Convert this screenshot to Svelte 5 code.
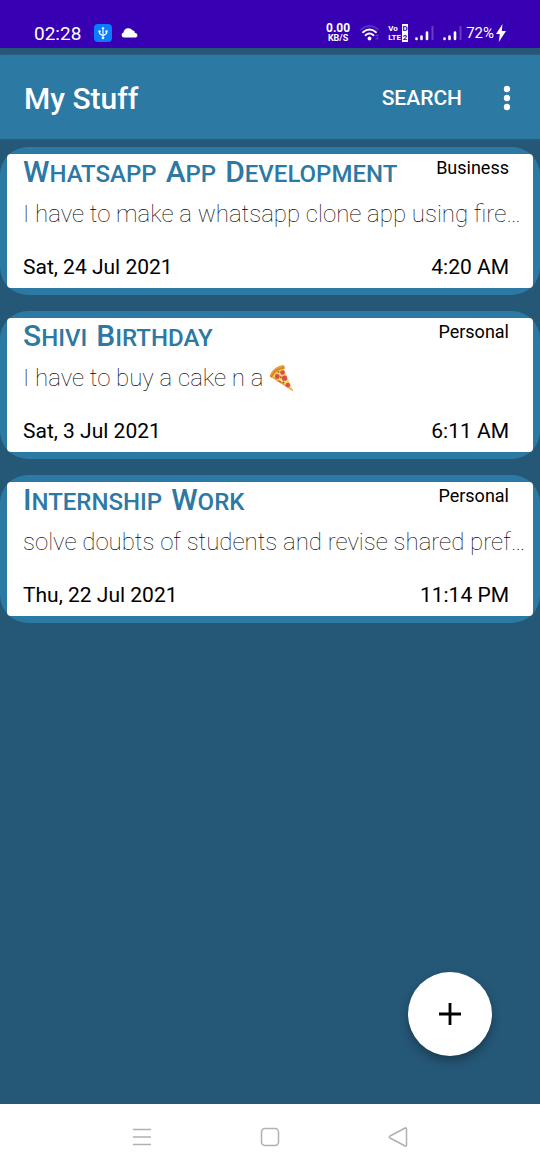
<script>
  const notes = [
    { title: 'Whatsapp App Development', tag: 'Business', body: 'I have to make a whatsapp clone app using fire…', date: 'Sat, 24 Jul 2021', time: '4:20 AM' },
    { title: 'Shivi Birthday', tag: 'Personal', body: 'I have to buy a cake n a', pizza: true, date: 'Sat, 3 Jul 2021', time: '6:11 AM' },
    { title: 'Internship Work', tag: 'Personal', body: 'solve doubts of students and revise shared pref…', date: 'Thu, 22 Jul 2021', time: '11:14 PM' }
  ];
</script>

{#snippet signal()}
  <svg width="20" height="18" viewBox="0 0 20 18" aria-hidden="true">
    <g stroke="#fff" stroke-width="2.600" stroke-linecap="round">
      <path d="M2.500 14.500v.5M7.500 12.500v2.500M13 8.500v6.500" />
    </g>
    <path d="M18.500 2v14" stroke="#6a3bc8" stroke-width="2" />
  </svg>
{/snippet}

<div class="screen">
  <header class="status">
    <span class="clock">02:28</span>
    <svg class="usb" width="18" height="18" viewBox="0 0 18 18" aria-hidden="true">
      <rect width="18" height="18" rx="4" fill="#0a7cff" />
      <g fill="none" stroke="#fff" stroke-width="1.100">
        <path d="M9 4v10M5.500 7v2.500L9 12l3.500-2.500V7" />
      </g>
      <path d="M9 2.500l1.600 2.500H7.400z" fill="#fff" />
      <circle cx="9" cy="14" r="1.300" fill="#fff" />
      <circle cx="5.500" cy="7.500" r="1.200" fill="#fff" />
      <path d="M11.400 6.400h2.200v2.200h-2.200z" fill="#fff" />
    </svg>
    <svg width="17" height="12" viewBox="0 0 17 12" aria-hidden="true">
      <path fill="#fff" d="M3 10.500a2.600 2.600 0 0 1-.5-5.100A5 5 0 0 1 11.500 3.300 3 3 0 0 1 14 6a2.300 2.300 0 0 1 .8 4.500z" />
    </svg>
    <span class="fill"></span>
    <span class="rate"><b>0.00</b><small>KB/S</small></span>
    <svg class="wifi" width="20" height="18" viewBox="0 0 20 18" aria-hidden="true">
      <g fill="none" stroke="#fff" stroke-width="1.900" stroke-linecap="round">
        <path d="M1 5.500Q9.500-1.500 18 5.500" stroke="#5a2bc2" />
        <path d="M3 8.200Q9.500 2.700 16 8.200" />
        <path d="M5.500 11.200Q9.500 7.700 13.500 11.200" />
      </g>
      <circle cx="9.500" cy="14.500" r="1.900" fill="#fff" />
      <path d="M15.500 11.500h3M15.500 14.500h3" stroke="#6a3bc8" stroke-width="1.500" />
    </svg>
    <span class="volte">
      <span>Vo<i>D</i></span>
      <span>LTE<i>2</i></span>
    </span>
    {@render signal()}
    <span class="gap"></span>
    {@render signal()}
    <span class="battery">72%</span>
    <svg width="10" height="18" viewBox="0 0 10 18" aria-hidden="true">
      <path fill="#fff" d="M6.500 0L0 10h3.800L2.800 18 10 7H5.800z" />
    </svg>
  </header>

  <div class="bar">
    <h1>My Stuff</h1>
    <button class="search">SEARCH</button>
    <button class="more" aria-label="More options">
      <svg width="8" height="26" viewBox="0 0 8 26" fill="#fff"><circle cx="4" cy="4" r="3.200" /><circle cx="4" cy="13" r="3.200" /><circle cx="4" cy="22" r="3.200" /></svg>
    </button>
  </div>

  <main>
    {#each notes as note}
      <article>
        <div class="card">
          <div class="row top">
            <h2>{#each note.title.split(' ') as word}<span>{word}</span>{/each}</h2>
            <span class="tag">{note.tag}</span>
          </div>
          <p>
            {note.body}
            {#if note.pizza}
              <svg width="26" height="28" viewBox="0 0 26 28" role="img" aria-label="pizza">
                <path fill="#fbc84b" d="M2 12L14 3l10 24z" />
                <path fill="#ffd968" d="M4.500 12.500L13.500 5.500l9.500 20z" />
                <path fill="#d98218" d="M.8 12.500C2 6.500 8 1.500 15 1.200l1 3.300C10 5.200 5 8.500 3 14z" />
                <path fill="#f2a33a" d="M1.500 11C3.500 6 8.500 2.300 14.500 2l.4 1C9 3.600 4.500 6.500 2.500 11.500z" />
                <path fill="#e8a12c" d="M3 13.800l21 13.500-.3-1.500L4 12.500z" />
                <g fill="#dc4a55"><circle cx="13.500" cy="8.500" r="2.300" /><circle cx="8.300" cy="12.500" r="2.400" /><circle cx="15.500" cy="14.200" r="2.600" /><circle cx="18.800" cy="21" r="2.300" /><path d="M8.500 17q3-2 4.500 2.600z" /></g>
                <g fill="#7d7a24"><circle cx="11.800" cy="13.300" r="1" /><circle cx="14.500" cy="18.500" r="1.100" /><circle cx="9.500" cy="8" r=".9" /></g>
              </svg>
            {/if}
          </p>
          <div class="row when">
            <span>{note.date}</span>
            <span>{note.time}</span>
          </div>
        </div>
      </article>
    {/each}
    <button class="fab" aria-label="Add note">
      <svg width="22" height="22" viewBox="0 0 22 22" stroke="#000" stroke-width="2.800"><path d="M11 0v22M0 11h22" /></svg>
    </button>
  </main>

  <nav>
    <button aria-label="Recent apps">
      <svg width="20" height="20" viewBox="0 0 20 20" stroke="#b0b0b0" stroke-width="1.500"><path d="M1 2.500h18M1 10h18M1 17.500h18" /></svg>
    </button>
    <button aria-label="Home">
      <svg width="20" height="20" viewBox="0 0 20 20" fill="none" stroke="#b0b0b0" stroke-width="1.500"><rect x="1.500" y="1.500" width="17" height="17" rx="3.500" /></svg>
    </button>
    <button aria-label="Back">
      <svg width="20" height="20" viewBox="0 0 20 20" fill="none" stroke="#b0b0b0" stroke-width="1.500" stroke-linejoin="round"><path d="M17.200 1Q18.500.5 18.500 2v16q0 1.500-1.300 1L2 11Q.5 10 2 9z" /></svg>
    </button>
  </nav>
</div>

<style>
  :global(body) { margin: 0; background: #255777; }
  * { box-sizing: border-box; }
  button { border: 0; padding: 0; background: none; color: inherit; font: inherit; cursor: pointer; display: flex; align-items: center; justify-content: center; }
  svg { flex: none; }
  .screen { min-height: 100vh; display: flex; flex-direction: column; font-family: Roboto, sans-serif; color: #000; background: #255777; }
  .status { height: 48px; padding: 18px 34px 0; display: flex; align-items: center; color: #fff; background: #3700b3; }
  .clock { font-size: 19px; margin-right: 13px; }
  .usb { margin-right: 9px; }
  .fill { flex: 1; }
  .rate { display: flex; flex-direction: column; align-items: center; line-height: 11px; font-size: 12px; }
  .rate b { font-weight: 700; }
  .rate small { font-size: 9px; line-height: 9px; font-weight: 700; }
  .wifi { margin: 0 8px 0 10px; }
  .volte { width: 20px; display: flex; flex-direction: column; font-size: 8px; line-height: 9px; font-weight: 700; margin-right: 6px; }
  .volte > span { display: flex; justify-content: space-between; }
  .volte i { width: 6px; text-align: center; font-style: normal; background: #fff; color: #3700b3; }
  .gap { width: 8px; }
  .battery { font-size: 15px; margin: 0 2px 0 4px; }
  .bar { height: 84px; margin-top: 7px; padding: 2px 20px 0 24px; display: flex; align-items: center; color: #fff; background: #2c79a4; box-shadow: 0 0 3px #2c6a8e; }
  h1 { flex: 1; margin: 0; font-size: 30px; font-weight: 500; }
  .search { font-size: 21px; font-weight: 500; }
  .more { width: 26px; height: 48px; margin-left: 32px; }
  main { flex: 1; padding: 8px 0; display: flex; flex-direction: column; gap: 16px; }
  article { padding: 7px; border-radius: 28px; background: #2c79a4; }
  .card { height: 134px; padding: 0 8px 0 16px; border-radius: 4px; background: #fff; }
  .row { display: flex; justify-content: space-between; padding-right: 16px; }
  .top { height: 42px; }
  h2 { margin: 0; display: flex; gap: 9px; font-size: 24px; line-height: 36px; font-weight: 500; color: #2c79a4; text-transform: uppercase; white-space: nowrap; }
  h2 span { display: block; }
  h2 span::first-letter { font-size: 30px; }
  .tag { font-size: 18px; line-height: 28px; }
  p { margin: 0; height: 36px; display: flex; align-items: center; gap: 6px; font-size: 24px; font-weight: 100; white-space: nowrap; }
  .when { padding-top: 20px; font-size: 21px; line-height: 30px; }
  .fab { width: 84px; height: 84px; margin: auto 48px 40px auto; border-radius: 50%; background: #fff; box-shadow: 0 5px 10px rgba(0, 0, 0, .3); }
  nav { height: 66px; background: #fff; display: flex; justify-content: center; gap: 64px; }
  nav button { width: 64px; }
</style>
